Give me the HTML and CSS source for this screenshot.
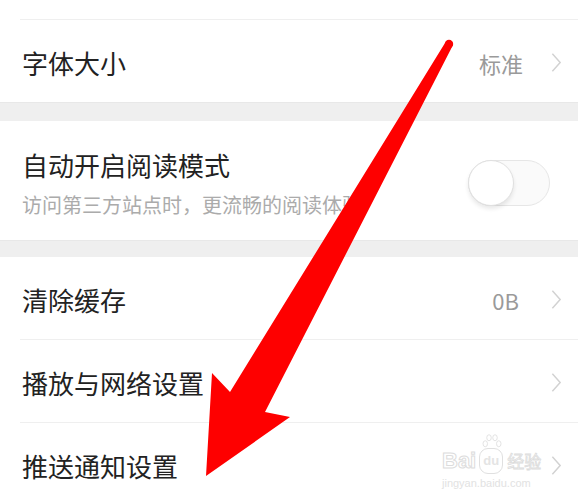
FILE: index.html
```html
<!DOCTYPE html>
<html lang="zh-CN">
<head>
  <meta charset="UTF-8" />
  <meta name="viewport" content="width=device-width, initial-scale=1" />
  <title>设置</title>
  <link rel="stylesheet" href="styles.css">
</head>
<body>
  <div class="page">
    <div class="group">
      <div class="row row-prev"></div>
      <div class="row no-line">
        <span class="label">字体大小</span>
        <span class="value">标准</span>
        <svg class="chevron" viewBox="0 0 12 22"><path d="M1.5 1.5 L10 11 L1.5 20.5" /></svg>
      </div>
    </div>

    <div class="band"></div>

    <div class="group">
      <div class="row row-tall no-line">
        <div class="text-col">
          <span class="label">自动开启阅读模式</span>
          <span class="hint">访问第三方站点时，更流畅的阅读体验</span>
        </div>
        <div class="switch"><div class="knob"></div></div>
      </div>
    </div>

    <div class="band band-small"></div>

    <div class="group">
      <div class="row">
        <span class="label">清除缓存</span>
        <span class="value value-size">0B</span>
        <svg class="chevron" viewBox="0 0 12 22"><path d="M1.5 1.5 L10 11 L1.5 20.5" /></svg>
      </div>
      <div class="row">
        <span class="label">播放与网络设置</span>
        <svg class="chevron" viewBox="0 0 12 22"><path d="M1.5 1.5 L10 11 L1.5 20.5" /></svg>
      </div>
      <div class="row no-line">
        <span class="label">推送通知设置</span>
        <svg class="chevron" viewBox="0 0 12 22"><path d="M1.5 1.5 L10 11 L1.5 20.5" /></svg>
      </div>
    </div>

    <!-- водяной знак -->
    <div class="watermark">
      <svg class="paw" viewBox="0 0 30 24">
        <ellipse cx="6" cy="13" rx="3" ry="4" />
        <ellipse cx="11" cy="5" rx="3" ry="4" />
        <ellipse cx="19" cy="5" rx="3" ry="4" />
        <ellipse cx="24" cy="13" rx="3" ry="4" />
      </svg>
      <div class="wm-logo"><span>Bai</span><span class="wm-du">du</span><span class="wm-cn">经验</span></div>
      <div class="wm-url">jingyan.baidu.com</div>
    </div>

    <!-- красная стрелка -->
    <svg class="arrow" viewBox="0 0 578 494">
      <polygon points="445,43 453,45 265,412 290,417 206,476 212,373 230,392" />
      <circle cx="449" cy="44" r="4.2" />
    </svg>
  </div>
</body>
</html>
```

FILE: styles.css
```css
body {
  margin: 0;
  background: #fff;
  font-family: "Noto Sans CJK SC", "Noto Sans", sans-serif;
  color: #222;
}
.page {
  position: relative;
  width: 578px;
  height: 494px;
  overflow: hidden;
  background: #fff;
}
.group {
  padding-left: 20px;
}
.row {
  display: flex;
  align-items: center;
  height: 82px;
  padding: 0 16px 0 2px;
  border-bottom: 1px solid #efefef;
}
.row.no-line {
  border-bottom: none;
}
.row-prev {
  height: 19px;
}
.row-tall {
  height: 119px;
  padding-right: 28px;
}
.label {
  flex: 1;
  font-size: 26px;
  line-height: 36px;
  color: #222;
  padding-top: 4px;
}
.value {
  font-size: 22px;
  color: #9a9a9a;
  margin-right: 28px;
  padding-top: 4px;
}
.value-size {
  margin-right: 32px;
}
.chevron {
  width: 11px;
  height: 23px;
  fill: none;
  stroke: #d2d2d2;
  stroke-width: 1.6;
  margin-top: 2px;
}
.text-col {
  flex: 1;
  display: flex;
  flex-direction: column;
  padding-top: 4px;
}
.text-col .label {
  padding-top: 0;
}
.hint {
  font-size: 20px;
  line-height: 28px;
  margin-top: 8px;
  color: #ababab;
}
.band {
  height: 19px;
  background: #efefef;
  border-top: 1px solid #e8e8e8;
  box-sizing: border-box;
}
.band-small {
  height: 17px;
}

/* Переключатель */
.switch {
  position: relative;
  width: 82px;
  height: 46px;
  border-radius: 23px;
  background: #fafafa;
  border: 1px solid #e6e6e6;
  box-sizing: border-box;
  margin-top: 4px;
}
.knob {
  position: absolute;
  left: -1px;
  top: -1px;
  width: 46px;
  height: 46px;
  border-radius: 50%;
  background: #fff;
  border: 1px solid #e0e0e0;
  box-sizing: border-box;
  box-shadow: 0 3px 4px rgba(0,0,0,0.09);
}

/* Водяной знак */
.watermark {
  position: absolute;
  left: 442px;
  top: 434px;
  width: 108px;
  color: #fff;
  font-family: "Liberation Sans", sans-serif;
}
.paw {
  position: absolute;
  left: 38px;
  top: 0;
  width: 24px;
  height: 18px;
  fill: none;
  stroke: #e0e0e0;
  stroke-width: 1.2;
}
.wm-logo {
  margin-top: 14px;
  display: flex;
  align-items: center;
  font-size: 22px;
  font-weight: 700;
  line-height: 24px;
  -webkit-text-stroke: 1px #dcdcdc;
}
.wm-du {
  font-size: 13px;
  border: 1px solid #e0e0e0;
  border-radius: 9px;
  padding: 0 3px;
  margin: 0 4px 0 3px;
  color: #e4e4e4;
  -webkit-text-stroke: 0;
}
.wm-cn {
  font-family: "Noto Sans CJK SC", sans-serif;
  font-size: 17px;
  font-weight: 400;
  -webkit-text-stroke: 0.8px #dcdcdc;
}
.wm-url {
  font-size: 11px;
  line-height: 18px;
  color: #e2e2e2;
}

/* Стрелка */
.arrow {
  position: absolute;
  left: 0;
  top: 0;
  width: 578px;
  height: 494px;
  fill: #fe0000;
  pointer-events: none;
}
```
